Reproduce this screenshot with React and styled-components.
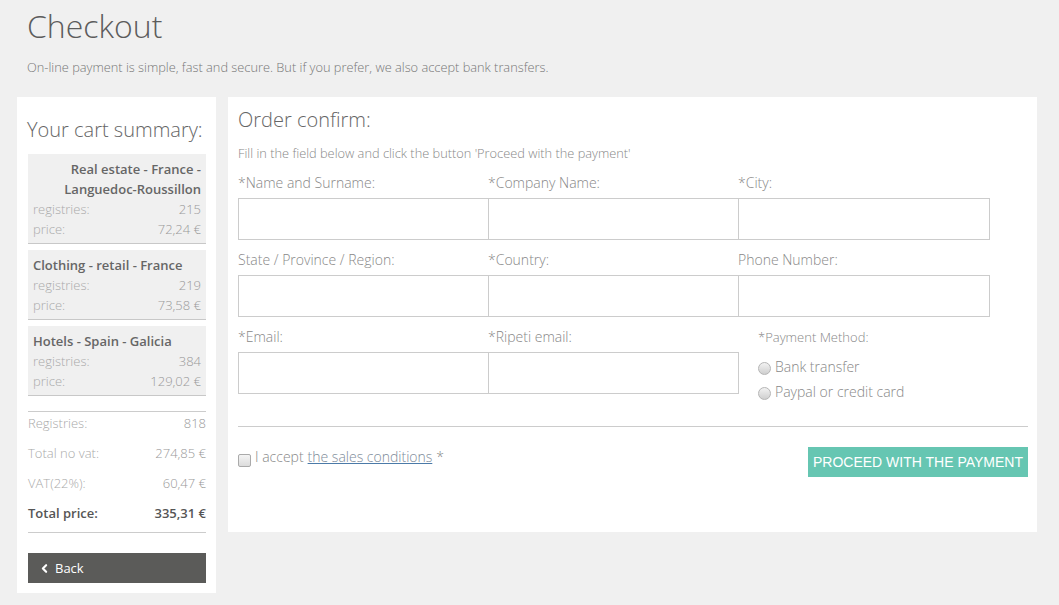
import React from "react";
import styled, { createGlobalStyle } from "styled-components";
import { ChevronLeft } from "lucide-react";

const GlobalStyle = createGlobalStyle`
  body {
    margin: 0;
    background: #f0f0f0;
    font-family: "Open Sans", "Liberation Sans", sans-serif;
    font-weight: 300;
    color: #777;
  }
`;

const Page = styled.div`
  padding: 0 22px 13px 17px;
`;

const Header = styled.header`
  padding: 5px 0 0 10px;
  height: 92px;
  h1 {
    margin: 0;
    font-size: 32px;
    font-weight: 300;
    line-height: 42px;
    color: #5c5c5c;
  }
  p {
    margin: 11px 0 0;
    font-size: 12.8px;
    line-height: 18px;
    color: #777;
  }
`;

const Columns = styled.div`
  display: flex;
  align-items: flex-start;
  gap: 12px;
`;

const Panel = styled.section`
  background: #fff;
  box-sizing: border-box;
  width: ${({ $width }) => $width}px;
  padding: ${({ $pad }) => $pad};
`;

const PanelTitle = styled.h2`
  margin: 0;
  font-size: 20px;
  font-weight: 300;
  line-height: 28px;
  color: #666;
  margin-left: ${({ $shift }) => $shift || 0}px;
`;

const Items = styled.div`
  display: flex;
  flex-direction: column;
  gap: 6px;
  margin-top: 10px;
`;

const Item = styled.div`
  background: #f0f0f0;
  padding: 5px 5px 4px;
  border-bottom: 1px solid #c8c8c8;
`;

const ItemTitle = styled.div`
  font-size: 13px;
  font-weight: 600;
  line-height: 20px;
  color: #666;
  text-align: ${({ $right }) => ($right ? "right" : "left")};
`;

const Line = styled.div`
  display: flex;
  justify-content: space-between;
  font-size: 13px;
  line-height: 20px;
  font-weight: ${({ $bold }) => ($bold ? 600 : 300)};
  color: ${({ $bold }) => ($bold ? "#555" : "#999")};
  span:first-child {
    color: ${({ $bold }) => ($bold ? "#555" : "#aaa")};
  }
`;

const Totals = styled.div`
  display: flex;
  flex-direction: column;
  gap: 10px;
  margin-top: 15px;
  padding: 1px 0 9px;
  border-top: 1px solid #ccc;
  border-bottom: 1px solid #ccc;
`;

const BackButton = styled.button`
  display: flex;
  align-items: center;
  gap: 4px;
  width: 100%;
  height: 30px;
  margin-top: 20px;
  padding: 0 10px;
  border: 0;
  background: #5b5b59;
  color: #fff;
  font-family: "Open Sans", sans-serif;
  font-size: 13px;
  cursor: pointer;
`;

const Intro = styled.p`
  margin: 10px 0 11px;
  font-size: 12.8px;
  line-height: 18px;
  color: #888;
`;

const FormGrid = styled.div`
  display: grid;
  grid-template-columns: 250px 250px 251px;
  row-gap: 10px;
`;

const Field = styled.div`
  display: flex;
  flex-direction: column;
`;

const Label = styled.label`
  font-size: 14px;
  line-height: 20px;
  color: #888;
  margin-bottom: 5px;
`;

const Input = styled.input`
  box-sizing: border-box;
  width: calc(100% + 1px);
  height: 42px;
  border: 1px solid #ccc;
  background: #fff;
  outline: none;
`;

const Payment = styled.div`
  padding-left: 20px;
  color: #888;
`;

const PayLabel = styled.div`
  font-size: 13px;
  line-height: 20px;
  margin-bottom: 7px;
`;

const Radio = styled.label`
  display: flex;
  align-items: center;
  gap: 4px;
  font-size: 14px;
  line-height: 25px;
  color: #888;
  &::before {
    content: "";
    width: 11px;
    height: 11px;
    margin-top: 4px;
    border-radius: 50%;
    border: 1px solid #b5b5b5;
    background: linear-gradient(#f2f2f2, #cfcfcf);
  }
`;

const Rule = styled.hr`
  margin: 22px 0 20px;
  border: 0;
  border-top: 1px solid #ccc;
`;

const Footer = styled.div`
  display: flex;
  justify-content: space-between;
  align-items: flex-start;
  margin-bottom: 55px;
`;

const Accept = styled.label`
  display: flex;
  align-items: flex-start;
  gap: 4px;
  font-size: 14px;
  line-height: 20px;
  color: #888;
  a {
    color: #7d8b99;
    text-decoration: underline;
    text-decoration-color: #4b7aa8;
  }
`;

const Check = styled.span`
  width: 11px;
  height: 11px;
  margin-top: 7px;
  border: 1px solid #aaa;
  border-radius: 2px;
  background: linear-gradient(#f4f4f4, #dcdcdc);
`;

const Proceed = styled.button`
  height: 30px;
  padding: 0 5px;
  border: 0;
  background: #66c6b2;
  color: #fff;
  font-family: "Liberation Sans", Arial, sans-serif;
  font-size: 14px;
  text-transform: uppercase;
  cursor: pointer;
`;

const cart = [
  { title: "Real estate - France - Languedoc-Roussillon", reg: 215, price: "72,24 €", right: true },
  { title: "Clothing - retail - France", reg: 219, price: "73,58 €" },
  { title: "Hotels - Spain - Galicia", reg: 384, price: "129,02 €" },
];

const fields = [
  "*Name and Surname:",
  "*Company Name:",
  "*City:",
  "State / Province / Region:",
  "*Country:",
  "Phone Number:",
  "*Email:",
  "*Ripeti email:",
];

export default function App() {
  return (
    <Page>
      <GlobalStyle />
      <Header>
        <h1>Checkout</h1>
        <p>On-line payment is simple, fast and secure. But if you prefer, we also accept bank transfers.</p>
      </Header>
      <Columns>
        <Panel $width={199} $pad="19px 10px 10px 11px">
          <PanelTitle $shift={-1}>Your cart summary:</PanelTitle>
          <Items>
            {cart.map((it) => (
              <Item key={it.title}>
                <ItemTitle $right={it.right}>{it.title}</ItemTitle>
                <Line>
                  <span>registries:</span>
                  <span>{it.reg}</span>
                </Line>
                <Line>
                  <span>price:</span>
                  <span>{it.price}</span>
                </Line>
              </Item>
            ))}
          </Items>
          <Totals>
            <Line><span>Registries:</span><span>818</span></Line>
            <Line><span>Total no vat:</span><span>274,85 €</span></Line>
            <Line><span>VAT(22%):</span><span>60,47 €</span></Line>
            <Line $bold><span>Total price:</span><span>335,31 €</span></Line>
          </Totals>
          <BackButton>
            <ChevronLeft size={13} strokeWidth={4} />
            Back
          </BackButton>
        </Panel>
        <Panel $width={809} $pad="9px 9px 0 10px">
          <PanelTitle>Order confirm:</PanelTitle>
          <Intro>Fill in the field below and click the button 'Proceed with the payment'</Intro>
          <FormGrid>
            {fields.map((f) => (
              <Field key={f}>
                <Label>{f}</Label>
                <Input type="text" />
              </Field>
            ))}
            <Payment>
              <PayLabel>*Payment Method:</PayLabel>
              <Radio>Bank transfer</Radio>
              <Radio>Paypal or credit card</Radio>
            </Payment>
          </FormGrid>
          <Rule />
          <Footer>
            <Accept>
              <Check />
              I accept <a href="#">the sales conditions</a> *
            </Accept>
            <Proceed>Proceed with the payment</Proceed>
          </Footer>
        </Panel>
      </Columns>
    </Page>
  );
}
